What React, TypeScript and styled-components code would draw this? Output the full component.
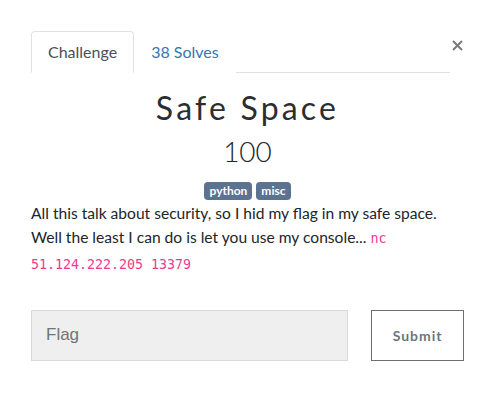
import React from "react";
import styled, { createGlobalStyle } from "styled-components";

const Global = createGlobalStyle`
  html, body { margin: 0; padding: 0; background: #fff; }
  body { font-family: Lato, "Noto Sans", sans-serif; color: #212529; }
  * { box-sizing: border-box; }
`;

const Page = styled.div`
  width: 497px;
  height: 404px;
  padding: 31px 33px 0 31px;
`;

const Header = styled.div`
  display: flex;
  align-items: flex-start;
`;

const Tabs = styled.ul`
  flex: 1;
  display: flex;
  list-style: none;
  margin: 0;
  padding: 0;
  border-bottom: 1px solid #dee2e6;
`;

const Tab = styled.li<{ $active?: boolean }>`
  margin-bottom: -1px;
  padding: 8px 16px;
  font-size: 16px;
  line-height: 24px;
  border: 1px solid ${(p) => (p.$active ? "#dee2e6" : "transparent")};
  border-bottom-color: ${(p) => (p.$active ? "#fff" : "transparent")};
  border-radius: 4px 4px 0 0;
  background: #fff;
  color: ${(p) => (p.$active ? "#495057" : "#3775ad")};
`;

const Close = styled.button`
  width: 14px;
  height: 28px;
  padding: 0;
  border: 0;
  background: transparent;
  display: flex;
  align-items: center;
  justify-content: center;
`;

const Title = styled.h2`
  margin: 16px 0 0;
  text-align: center;
  font-family: Lato, sans-serif;
  font-weight: 400;
  font-size: 32px;
  line-height: 1.2;
  letter-spacing: 3.2px;
  color: #2b2e31;
`;

const Value = styled.h3`
  margin: 8px 0 0;
  text-align: center;
  font-weight: 300;
  font-size: 28px;
  line-height: 1.2;
  color: #212529;
`;

const Tags = styled.div`
  display: flex;
  justify-content: center;
  gap: 4px;
  margin-top: 13px;
`;

const Badge = styled.span`
  display: inline-block;
  padding: 3px 5px;
  font-size: 12px;
  font-weight: 700;
  line-height: 1;
  color: #fff;
  background: #5b7290;
  border-radius: 4px;
`;

const Description = styled.p`
  margin: 1px 0 0;
  font-size: 15.6px;
  line-height: 24px;
  color: #212529;
`;

const Code = styled.code`
  font-family: "DejaVu Sans Mono", "Liberation Mono", monospace;
  font-size: 13.3px;
  color: #e83e8c;
`;

const Form = styled.form`
  display: flex;
  gap: 23px;
  margin-top: 33px;
`;

const FlagInput = styled.input`
  width: 318px;
  height: 51px;
  padding: 0 14px;
  background: #efefef;
  border: 1px solid #d9d9d9;
  font-family: "Liberation Sans", Arial, sans-serif;
  font-size: 17px;
  color: #495057;
  outline: none;
  &::placeholder { color: #737373; }
`;

const SubmitButton = styled.button`
  width: 93px;
  height: 51px;
  background: #fff;
  border: 1px solid #6f6f6f;
  font-family: Lato, sans-serif;
  font-weight: 700;
  font-size: 14px;
  letter-spacing: 1px;
  color: #6c757d;
`;

export default function App() {
  return (
    <Page>
      <Global />
      <Header>
        <Tabs>
          <Tab $active>Challenge</Tab>
          <Tab>38 Solves</Tab>
        </Tabs>
        <Close aria-label="Close">
          <svg width="11" height="11" viewBox="0 0 11 11">
            <path d="M1 1L10 10M10 1L1 10" stroke="#7a7a7a" strokeWidth="2" />
          </svg>
        </Close>
      </Header>
      <Title>Safe Space</Title>
      <Value>100</Value>
      <Tags>
        <Badge>python</Badge>
        <Badge>misc</Badge>
      </Tags>
      <Description>
        All this talk about security, so I hid my flag in my safe space. Well the least I can do is let you use my
        console... <Code>nc 51.124.222.205 13379</Code>
      </Description>
      <Form onSubmit={(e) => e.preventDefault()}>
        <FlagInput placeholder="Flag" />
        <SubmitButton type="submit">Submit</SubmitButton>
      </Form>
    </Page>
  );
}
